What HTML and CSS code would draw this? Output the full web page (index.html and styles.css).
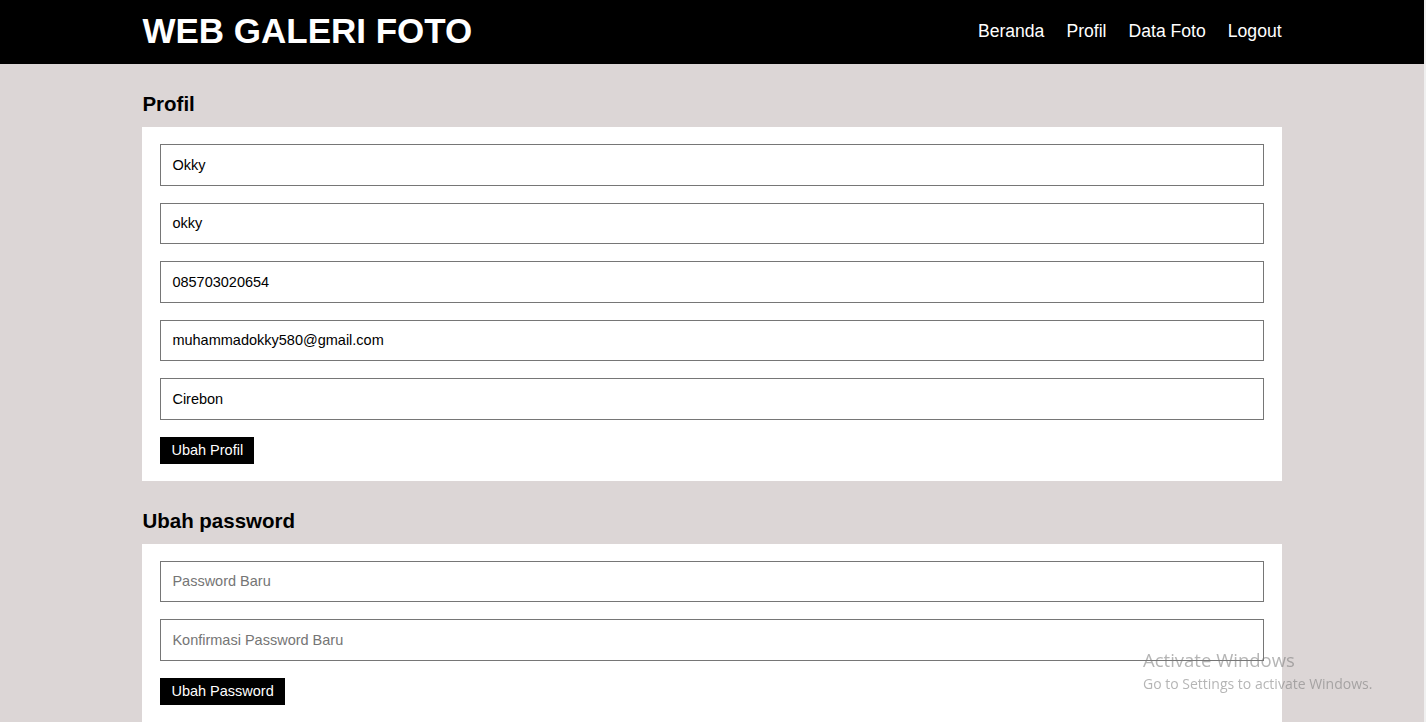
FILE: index.html
```html
<!DOCTYPE html>
<html lang="id">
<head>
<meta charset="utf-8">
<title>Web Galeri Foto - Profil</title>
<link rel="stylesheet" href="styles.css">
</head>
<body>
<header class="topbar">
  <div class="container topbar-inner">
    <h1 class="logo">WEB GALERI FOTO</h1>
    <nav class="nav">
      <a href="#">Beranda</a>
      <a href="#">Profil</a>
      <a href="#">Data Foto</a>
      <a href="#">Logout</a>
    </nav>
  </div>
</header>
<main class="container">
  <h3 class="section-title">Profil</h3>
  <div class="box">
    <form class="form">
      <input class="field" type="text" value="Okky">
      <input class="field" type="text" value="okky">
      <input class="field" type="text" value="085703020654">
      <input class="field" type="text" value="muhammadokky580@gmail.com">
      <input class="field" type="text" value="Cirebon">
      <button class="btn" type="button">Ubah Profil</button>
    </form>
  </div>
  <h3 class="section-title">Ubah password</h3>
  <div class="box">
    <form class="form">
      <input class="field" type="password" placeholder="Password Baru">
      <input class="field" type="password" placeholder="Konfirmasi Password Baru">
      <button class="btn" type="button">Ubah Password</button>
    </form>
  </div>
</main>
<div class="watermark">
  <div class="wm-title">Activate Windows</div>
  <div class="wm-sub">Go to Settings to activate Windows.</div>
</div>
</body>
</html>
```
FILE: styles.css
```css
html {
  background: #f0f0f0;
}
body {
  margin: 0 2px 0 0;
  min-height: 100vh;
  background: #dcd6d6;
  font-family: "Liberation Sans", Arial, sans-serif;
  color: #000;
}
.container {
  width: 80%;
  margin: 0 auto;
}
.topbar {
  background: #000;
  height: 64px;
}
.topbar-inner {
  height: 100%;
  display: flex;
  align-items: center;
  justify-content: space-between;
}
.logo {
  margin: 0;
  font-size: 35px;
  font-weight: bold;
  color: #fff;
  line-height: 1;
  padding-bottom: 4px;
}
.nav {
  display: flex;
  gap: 22px;
  padding-bottom: 2px;
}
.nav a {
  color: #fff;
  text-decoration: none;
  font-size: 17.6px;
}
.section-title {
  margin: 28px 0 12px;
  font-size: 20.5px;
  line-height: 23px;
  font-weight: bold;
}
.box {
  background: #fff;
  padding: 17px 18px;
}
.form {
  display: flex;
  flex-direction: column;
  align-items: flex-start;
}
.field {
  box-sizing: border-box;
  width: 100%;
  height: 41.5px;
  margin: 0 0 17px;
  padding: 0 11px;
  border: 1px solid #767676;
  border-radius: 0;
  font-family: "Liberation Sans", Arial, sans-serif;
  font-size: 14.5px;
  color: #000;
  background: #fff;
  outline: none;
}
.field::placeholder {
  color: #757575;
}
.btn {
  box-sizing: border-box;
  height: 27px;
  padding: 0 11px;
  border: 0;
  border-radius: 0;
  background: #000;
  color: #fff;
  font-family: "Liberation Sans", Arial, sans-serif;
  font-size: 14.5px;
  cursor: pointer;
}
.watermark {
  position: fixed;
  left: 1143px;
  top: 648px;
  color: rgba(120, 120, 120, 0.55);
  font-family: "Open Sans", "Noto Sans", sans-serif;
  pointer-events: none;
}
.wm-title {
  font-size: 18.5px;
  line-height: 24px;
}
.wm-sub {
  font-size: 14px;
  line-height: 20px;
  margin-top: 2px;
}
```
